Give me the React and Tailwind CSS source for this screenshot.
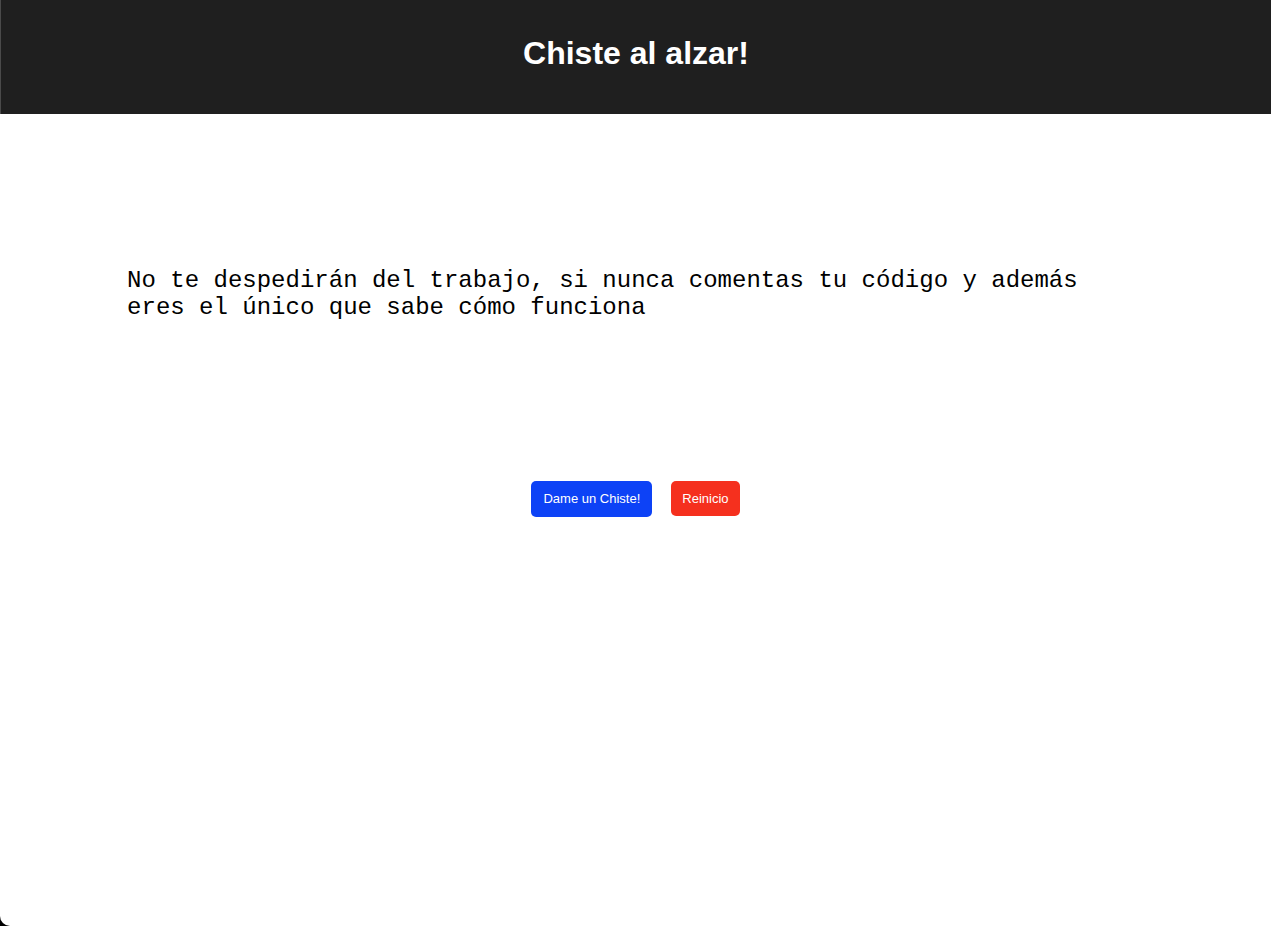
export default function App() {
  return (
    <div className="bg-black h-[926px] w-full">
      <div className="bg-white h-full w-full rounded-bl-[10px] flex flex-col">
        <header className="h-[114px] shrink-0 bg-[#1f1f1f] border-l border-[#4a4a4a] flex items-center justify-center pb-[8px]">
          <h1 className="text-white text-[32px] font-bold leading-none" style={{ fontFamily: '"Liberation Sans", Arial, sans-serif' }}>
            Chiste al alzar!
          </h1>
        </header>
        <main className="flex flex-col items-center">
          <p
            className="w-[80%] mt-[153px] text-[24px] leading-[27px] text-black"
            style={{ fontFamily: '"Liberation Mono", "Courier New", monospace' }}
          >
            No te despedirán del trabajo, si nunca comentas tu código y además eres el único que sabe cómo funciona
          </p>
          <div className="mt-[160px] flex gap-[19px]" style={{ fontFamily: '"Liberation Sans", Arial, sans-serif' }}>
            <button className="h-[36px] px-[12px] rounded-[5px] bg-[#0d42f6] text-white text-[13px]">Dame un Chiste!</button>
            <button className="h-[35px] px-[11px] rounded-[5px] bg-[#f5301e] text-white text-[13px]">Reinicio</button>
          </div>
        </main>
      </div>
    </div>
  );
}
